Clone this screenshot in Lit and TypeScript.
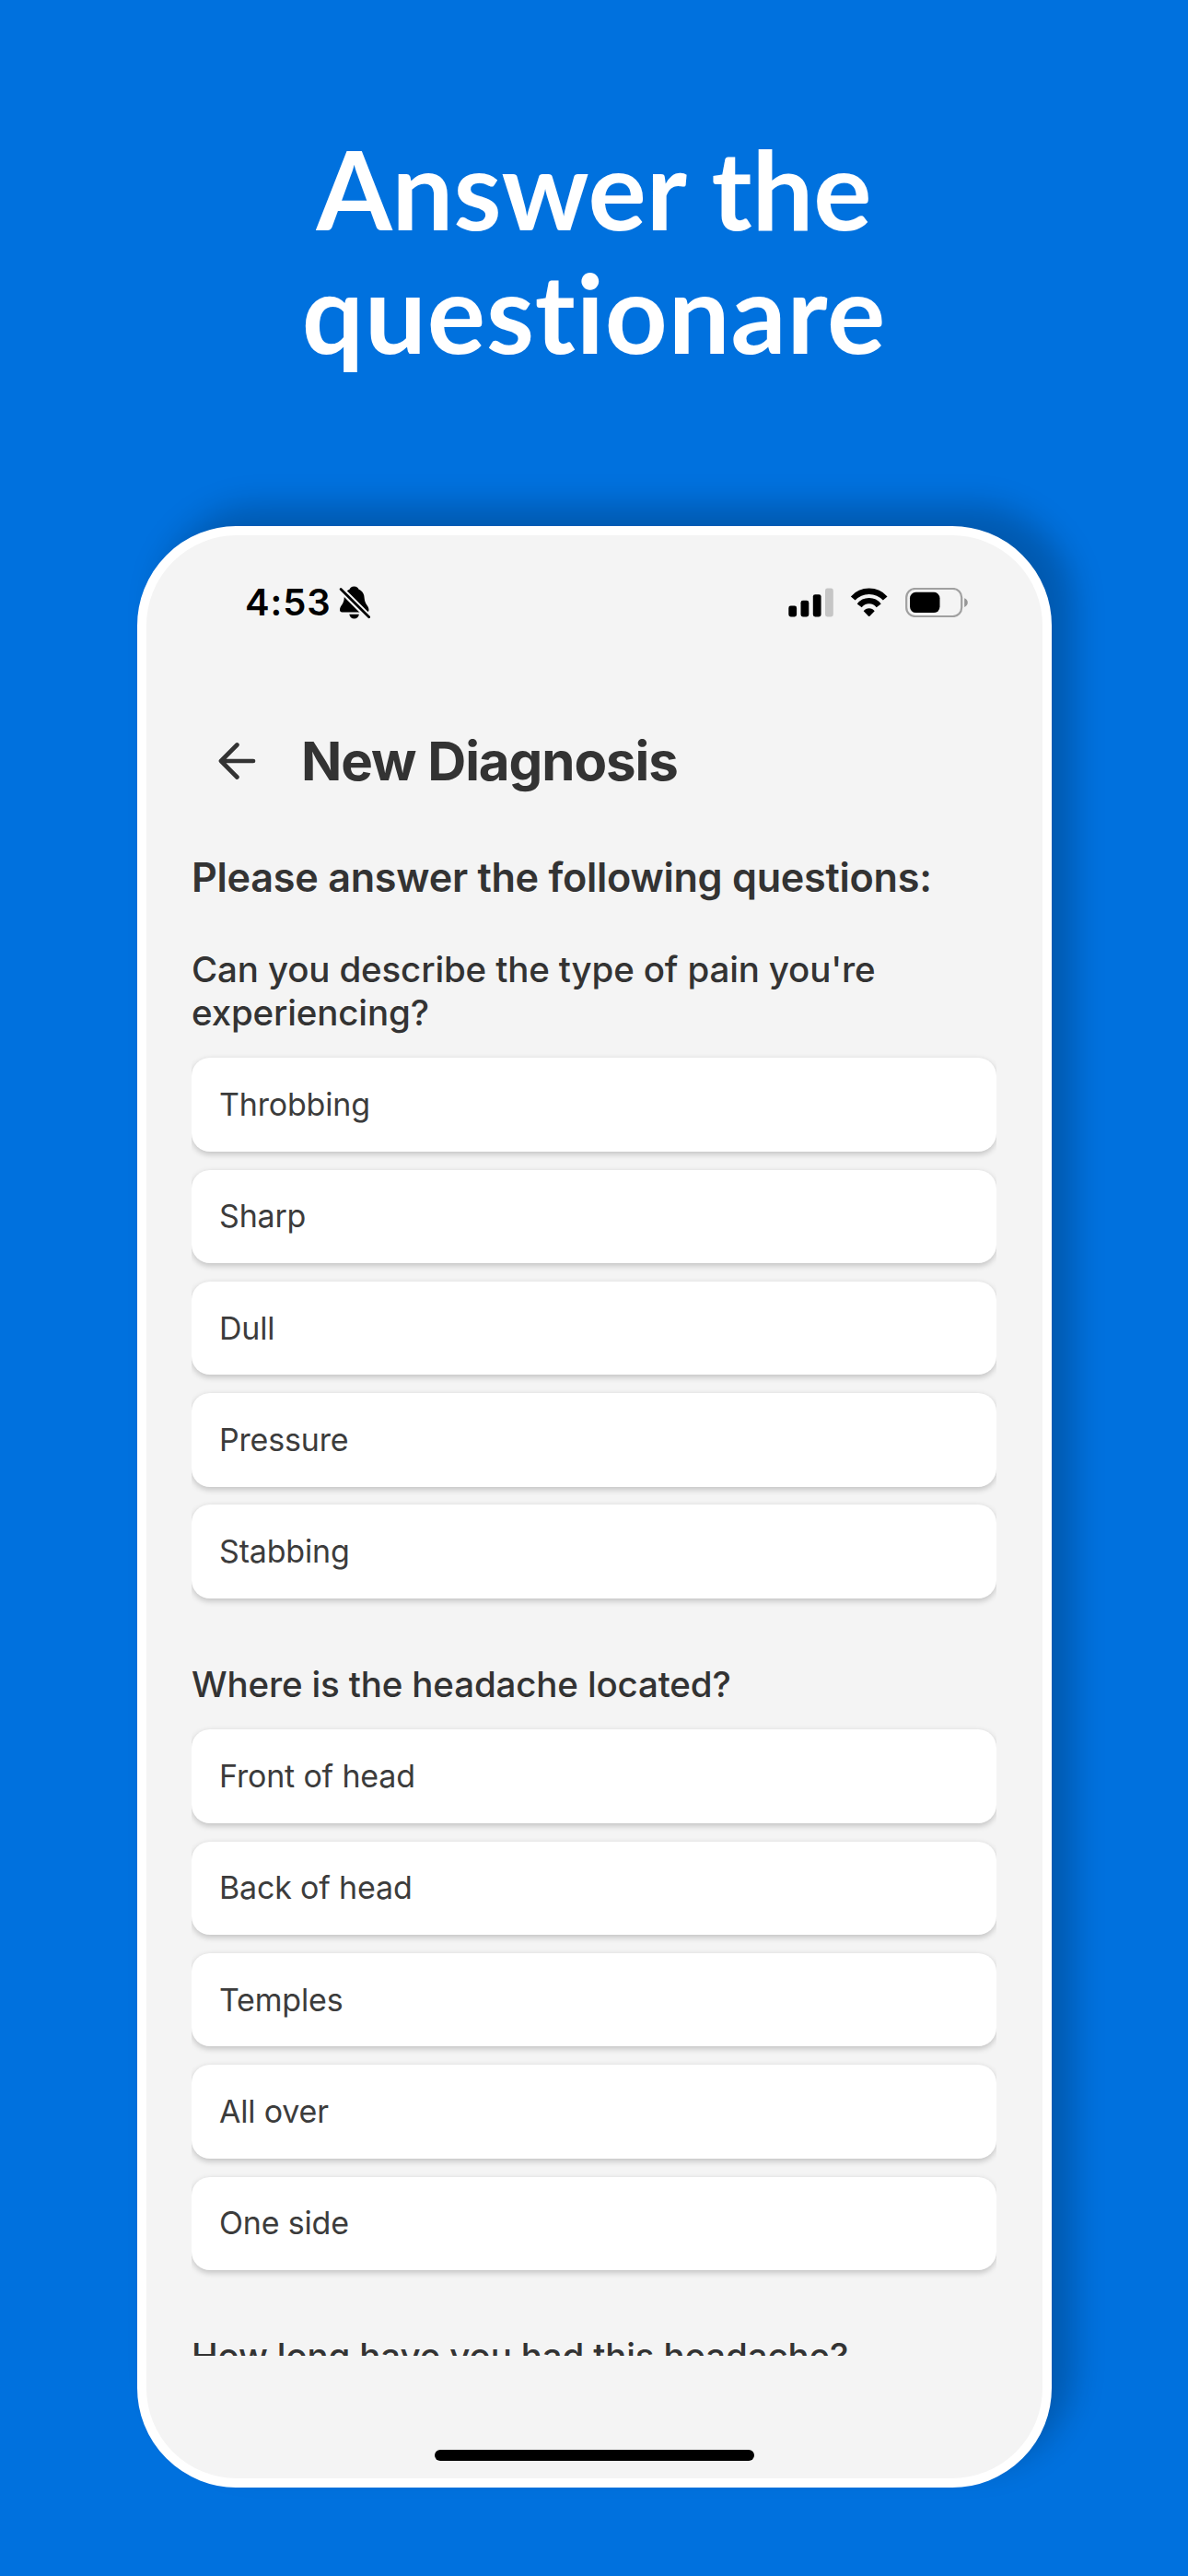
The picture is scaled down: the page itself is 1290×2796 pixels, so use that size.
import { LitElement, html, css } from "lit";
import { customElement, property } from "lit/decorators.js";

interface QuestionGroup {
  lines: string[];
  options: string[];
}

const GROUPS: QuestionGroup[] = [
  {
    lines: ["Can you describe the type of pain you're", "experiencing?"],
    options: ["Throbbing", "Sharp", "Dull", "Pressure", "Stabbing"],
  },
  {
    lines: ["Where is the headache located?"],
    options: ["Front of head", "Back of head", "Temples", "All over", "One side"],
  },
  { lines: ["How long have you had this headache?"], options: [] },
];

@customElement("status-bar")
export class StatusBar extends LitElement {
  static styles = css`
    :host {
      display: flex;
      align-items: center;
      height: 145px;
      padding: 0 81px 0 107px;
      box-sizing: border-box;
      color: #000;
    }
    .time {
      font-size: 40px;
      font-weight: 600;
      line-height: 48px;
      letter-spacing: 0.9px;
    }
    .bell {
      margin-left: 8px;
    }
    .icons {
      display: flex;
      align-items: center;
      gap: 18px;
      margin-left: auto;
    }
    svg {
      display: block;
      flex: none;
    }
  `;

  render() {
    return html`
      <span class="time">4:53</span>
      <svg class="bell" width="34" height="38" viewBox="8.5 9.5 34 38">
        <path
          d="M25 11c-3 0-4.2 1.4-5 3.2C15.6 16 14.4 20 14.2 24 13.8 30.5 9.5 32 9.5 36.6 9.5 38.3 10.4 39 12 39H38.4C40 39 41 38.3 41 36.6 41 32 36.6 30.5 36.2 24 36 19.5 34.5 16 30.1 14.2 29.3 12.4 28 11 25 11Z"
        />
        <path d="M19.8 41.3H30.4C29.8 44.3 28 46 25.1 46S20.4 44.3 19.8 41.3Z" />
        <path d="M9 12.4 42.6 46" stroke="#f4f4f4" stroke-width="7" fill="none" />
        <path d="M10.6 14 41.2 44.3" stroke="#000" stroke-width="2.7" stroke-linecap="round" fill="none" />
      </svg>
      <div class="icons">
        <svg width="49" height="32" viewBox="0 0 49 32">
          <rect x="0.3" y="19.6" width="8.8" height="11.8" rx="2.4" />
          <rect x="13.5" y="13.8" width="8.8" height="17.6" rx="2.4" />
          <rect x="26.8" y="7.2" width="8.8" height="24.2" rx="2.4" />
          <rect x="40" y="0.6" width="8.8" height="30.8" rx="2.4" fill="#c5c5c5" />
        </svg>
        <svg width="42" height="32" viewBox="0 0 42 32">
          <g fill="none" stroke="#000" stroke-width="6.3">
            <path d="M3.2 11.5A23.6 23.6 0 0 1 38.2 11.5" />
            <path d="M10.2 19.4A13.2 13.2 0 0 1 31.2 19.4" />
          </g>
          <path d="M14.7 25.3A7.5 7.5 0 0 1 26.7 25.3L21.4 30.7Q20.7 31.3 20 30.7Z" />
        </svg>
        <svg width="68" height="32" viewBox="0 0 68 32">
          <rect x="1.2" y="1" width="60" height="30" rx="9.5" fill="none" stroke="#a0a0a0" stroke-width="2.2" />
          <rect x="5" y="4.8" width="32.5" height="22.3" rx="6.5" />
          <path d="M64.2 11.2C69 13 69 19 64.2 20.9Z" fill="#969696" />
        </svg>
      </div>
    `;
  }
}

@customElement("question-group")
export class QuestionGroupElement extends LitElement {
  @property({ attribute: false }) group!: QuestionGroup;

  static styles = css`
    :host {
      display: block;
    }
    .question {
      font-size: 38.5px;
      font-weight: 500;
      line-height: 47px;
      letter-spacing: -0.15px;
      white-space: nowrap;
    }
    .options {
      display: flex;
      flex-direction: column;
      gap: 19.8px;
      margin-top: 25px;
    }
    .option {
      display: flex;
      align-items: center;
      height: 101.5px;
      padding: 0 30px;
      box-sizing: border-box;
      border-radius: 20px;
      background: #fff;
      box-shadow: 0 2.5px 6px rgba(0, 0, 0, 0.2);
      color: #3c3c3c;
      font-size: 34px;
      line-height: 42px;
      letter-spacing: -0.18px;
    }
  `;

  render() {
    const { lines, options } = this.group;
    return html`
      ${lines.map((line) => html`<div class="question">${line}</div>`)}
      ${options.length
        ? html`<div class="options">
            ${options.map((option) => html`<div class="option">${option}</div>`)}
          </div>`
        : null}
    `;
  }
}

@customElement("app-root")
export class AppRoot extends LitElement {
  static styles = css`
    :host {
      display: flex;
      flex-direction: column;
      align-items: center;
      width: 1290px;
      height: 2796px;
      box-sizing: border-box;
      padding-top: 137px;
      overflow: hidden;
      background: #0071de;
      font-family: Inter, "Liberation Sans", sans-serif;
    }
    .headline {
      display: flex;
      flex-direction: column;
      align-items: center;
      margin: 0;
      height: 434px;
      color: #fff;
      font-family: Lato, sans-serif;
      font-size: 118.5px;
      font-weight: 700;
      line-height: 134px;
      font-variant-ligatures: none;
    }
    .wide {
      letter-spacing: 0.9px;
    }
    .phone {
      display: flex;
      flex-direction: column;
      width: 993px;
      height: 2129px;
      box-sizing: border-box;
      margin-left: 1px;
      border: 10px solid #fff;
      border-radius: 108px;
      background: #f4f4f4;
      box-shadow: 24px -22px 34px rgba(0, 0, 0, 0.21);
      color: #333;
    }
    .header {
      display: flex;
      align-items: center;
      gap: 49px;
      height: 200px;
      padding-left: 78px;
    }
    .header svg {
      display: block;
    }
    .title {
      margin: 0;
      font-size: 58.2px;
      font-weight: 700;
      line-height: 70px;
      letter-spacing: -1.07px;
    }
    .content {
      display: flex;
      flex-direction: column;
      height: 1631px;
      margin: 0 50px 0 49px;
      overflow: hidden;
    }
    .intro {
      margin: 0 0 51px;
      font-size: 43.2px;
      font-weight: 600;
      line-height: 52.3px;
      letter-spacing: -0.27px;
      white-space: nowrap;
    }
    .groups {
      display: flex;
      flex-direction: column;
      gap: 70.4px;
    }
    .home {
      align-self: center;
      width: 347px;
      height: 12px;
      margin-top: 102px;
      border-radius: 6px;
      background: #000;
    }
  `;

  render() {
    return html`
      <h1 class="headline"><span>Answer the</span><span class="wide">questionare</span></h1>
      <main class="phone">
        <status-bar></status-bar>
        <header class="header">
          <svg width="41" height="40" viewBox="0 0 41 40">
            <path
              d="M38 20H3M20.4 2.5 3 20 20.4 37.5"
              fill="none"
              stroke="#333"
              stroke-width="4.7"
              stroke-linecap="round"
              stroke-linejoin="round"
            />
          </svg>
          <h2 class="title">New Diagnosis</h2>
        </header>
        <section class="content">
          <h3 class="intro">Please answer the following questions:</h3>
          <div class="groups">
            ${GROUPS.map((group) => html`<question-group .group=${group}></question-group>`)}
          </div>
        </section>
        <div class="home"></div>
      </main>
    `;
  }
}
